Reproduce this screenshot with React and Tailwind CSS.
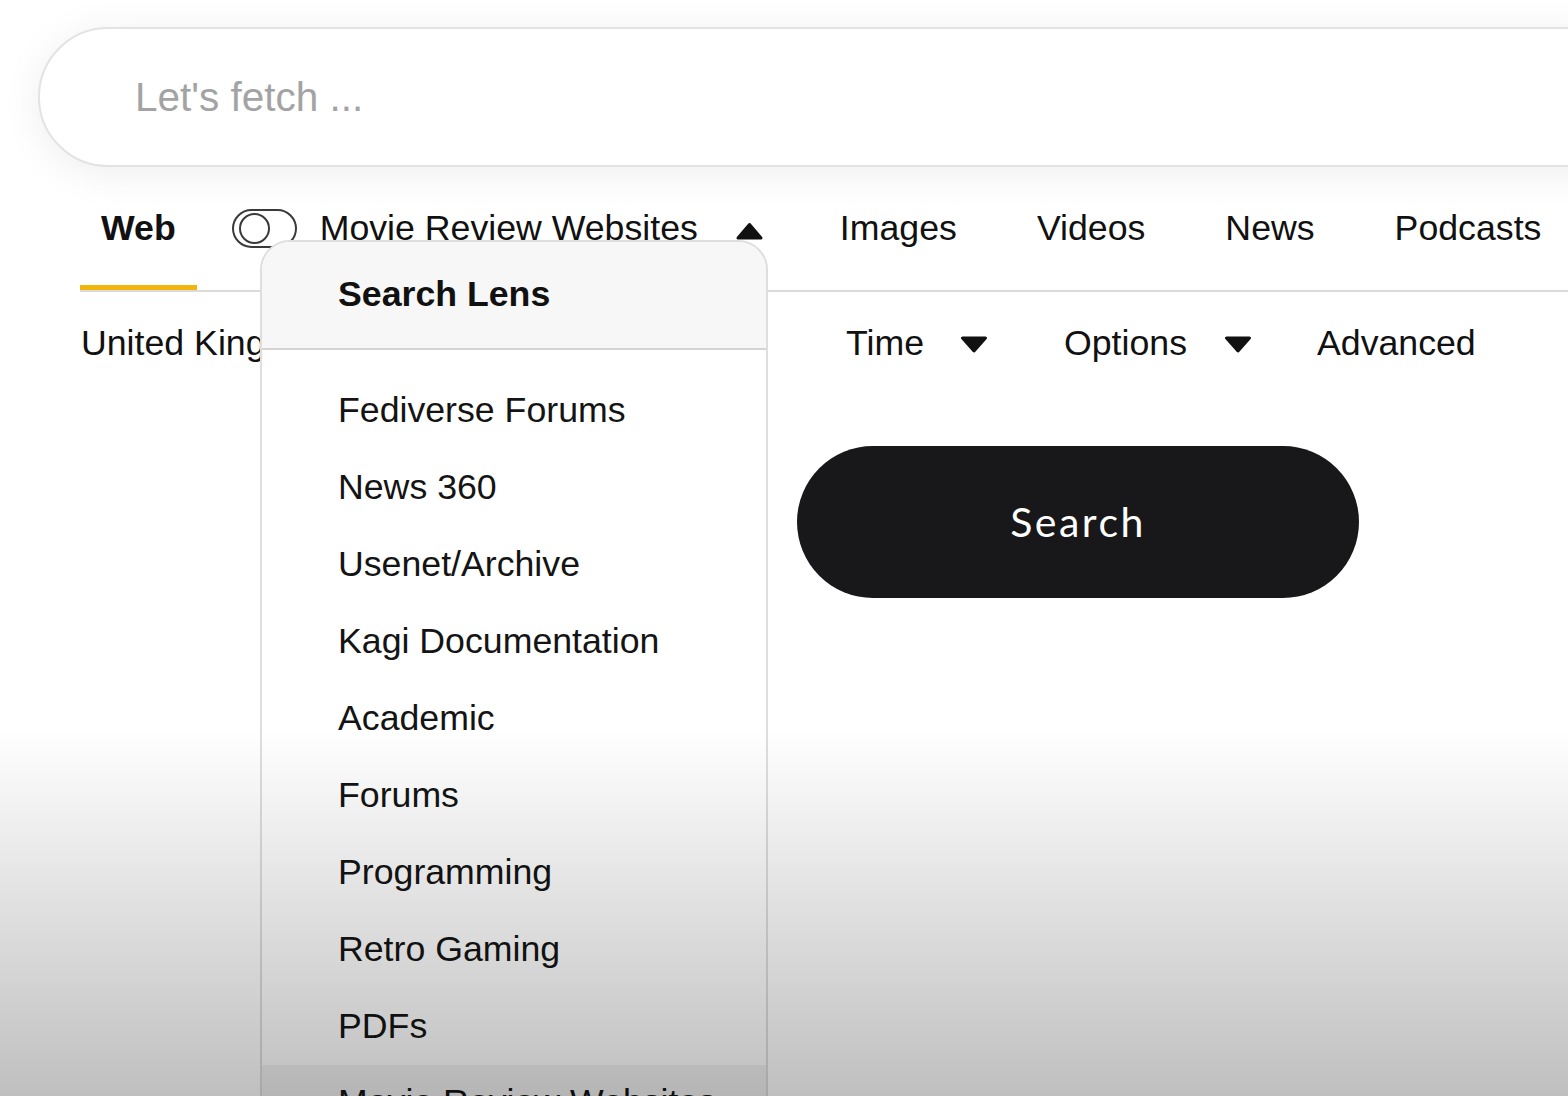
import React from "react";

function TriUp() {
  return (
    <svg width="29" height="18" viewBox="0 0 29 18" className="block">
      <path d="M3 16 L14.5 2.5 L26 16 Z" fill="#111" stroke="#111" strokeWidth="3" strokeLinejoin="round" />
    </svg>
  );
}

function TriDown() {
  return (
    <svg width="28" height="17" viewBox="0 0 28 17" className="block">
      <path d="M2.5 2 L25.5 2 L14 15 Z" fill="#111" stroke="#111" strokeWidth="3" strokeLinejoin="round" />
    </svg>
  );
}

const lenses = [
  "Fediverse Forums",
  "News 360",
  "Usenet/Archive",
  "Kagi Documentation",
  "Academic",
  "Forums",
  "Programming",
  "Retro Gaming",
  "PDFs",
];

export default function App() {
  return (
    <div className="relative w-[1568px] h-[1096px] overflow-hidden bg-white text-[#111] font-['Liberation_Sans',Arial,sans-serif]">
      {/* search bar */}
      <div className="pt-[27px] pl-[38px]">
        <div className="h-[140px] w-[1620px] rounded-full border-2 border-[#e3e3e3] bg-white shadow-[0_6px_40px_rgba(0,0,0,0.07)] flex items-center pl-[95px] text-[40.5px] text-[#a3a3a3]">
          Let's fetch ...
        </div>
      </div>

      {/* tabs row */}
      <div className="ml-[80px] h-[125px] flex items-center border-b-2 border-[#dadada] text-[35.7px] leading-none">
        <div className="h-full flex items-center px-[21px] pt-[5px] border-b-[5px] border-[#f2b50c] font-bold">
          Web
        </div>
        <div className="ml-[35px] w-[65px] h-[39px] rounded-full border-2 border-[#3a3a3a] flex items-center pl-[5px]">
          <div className="w-[31px] h-[31px] rounded-full border-2 border-[#3a3a3a] bg-white" />
        </div>
        <div className="ml-[23px]">Movie Review Websites</div>
        <div className="ml-[37px] pt-[4px]">
          <TriUp />
        </div>
        <div className="ml-[76px]">Images</div>
        <div className="ml-[80px]">Videos</div>
        <div className="ml-[80px]">News</div>
        <div className="ml-[80px]">Podcasts</div>
      </div>

      {/* filters row */}
      <div className="ml-[81px] h-[104px] flex items-center text-[35.7px] leading-none">
        <div className="w-[765px] flex items-center">
          <span>United Kingdom</span>
          <span className="ml-[38px]">
            <TriDown />
          </span>
        </div>
        <div>Time</div>
        <div className="ml-[36px]">
          <TriDown />
        </div>
        <div className="ml-[76px]">Options</div>
        <div className="ml-[37px]">
          <TriDown />
        </div>
        <div className="ml-[65px]">Advanced</div>
      </div>

      {/* search button */}
      <div className="mt-[50px] ml-[797px]">
        <button className="w-[562px] h-[152px] rounded-full bg-[#18181a] text-white text-[41px] tracking-[2.5px] font-['Lato',sans-serif] flex items-center justify-center">
          Search
        </button>
      </div>

      {/* dropdown */}
      <div className="absolute left-[260px] top-[240px] w-[508px] h-[900px] rounded-t-[30px] border-2 border-[#dedede] bg-white overflow-hidden">
        <div className="h-[108px] bg-[#f7f7f7] border-b-2 border-[#d4d4d4] flex items-center pl-[76px] text-[35.7px] font-bold leading-none">
          Search Lens
        </div>
        <div className="pt-[22px] text-[35.7px] leading-none text-[#141414]">
          {lenses.map((l) => (
            <div key={l} className="h-[77px] flex items-center pl-[76px]">
              {l}
            </div>
          ))}
          <div className="h-[77px] flex items-start pt-[20px] pl-[76px] bg-[#f2f2f2]">
            Movie Review Websites
          </div>
        </div>
      </div>

      {/* bottom vignette */}
      <div className="pointer-events-none absolute inset-x-0 top-[730px] bottom-0 bg-[linear-gradient(to_bottom,rgba(0,0,0,0),rgba(0,0,0,0.25))]" />
    </div>
  );
}
